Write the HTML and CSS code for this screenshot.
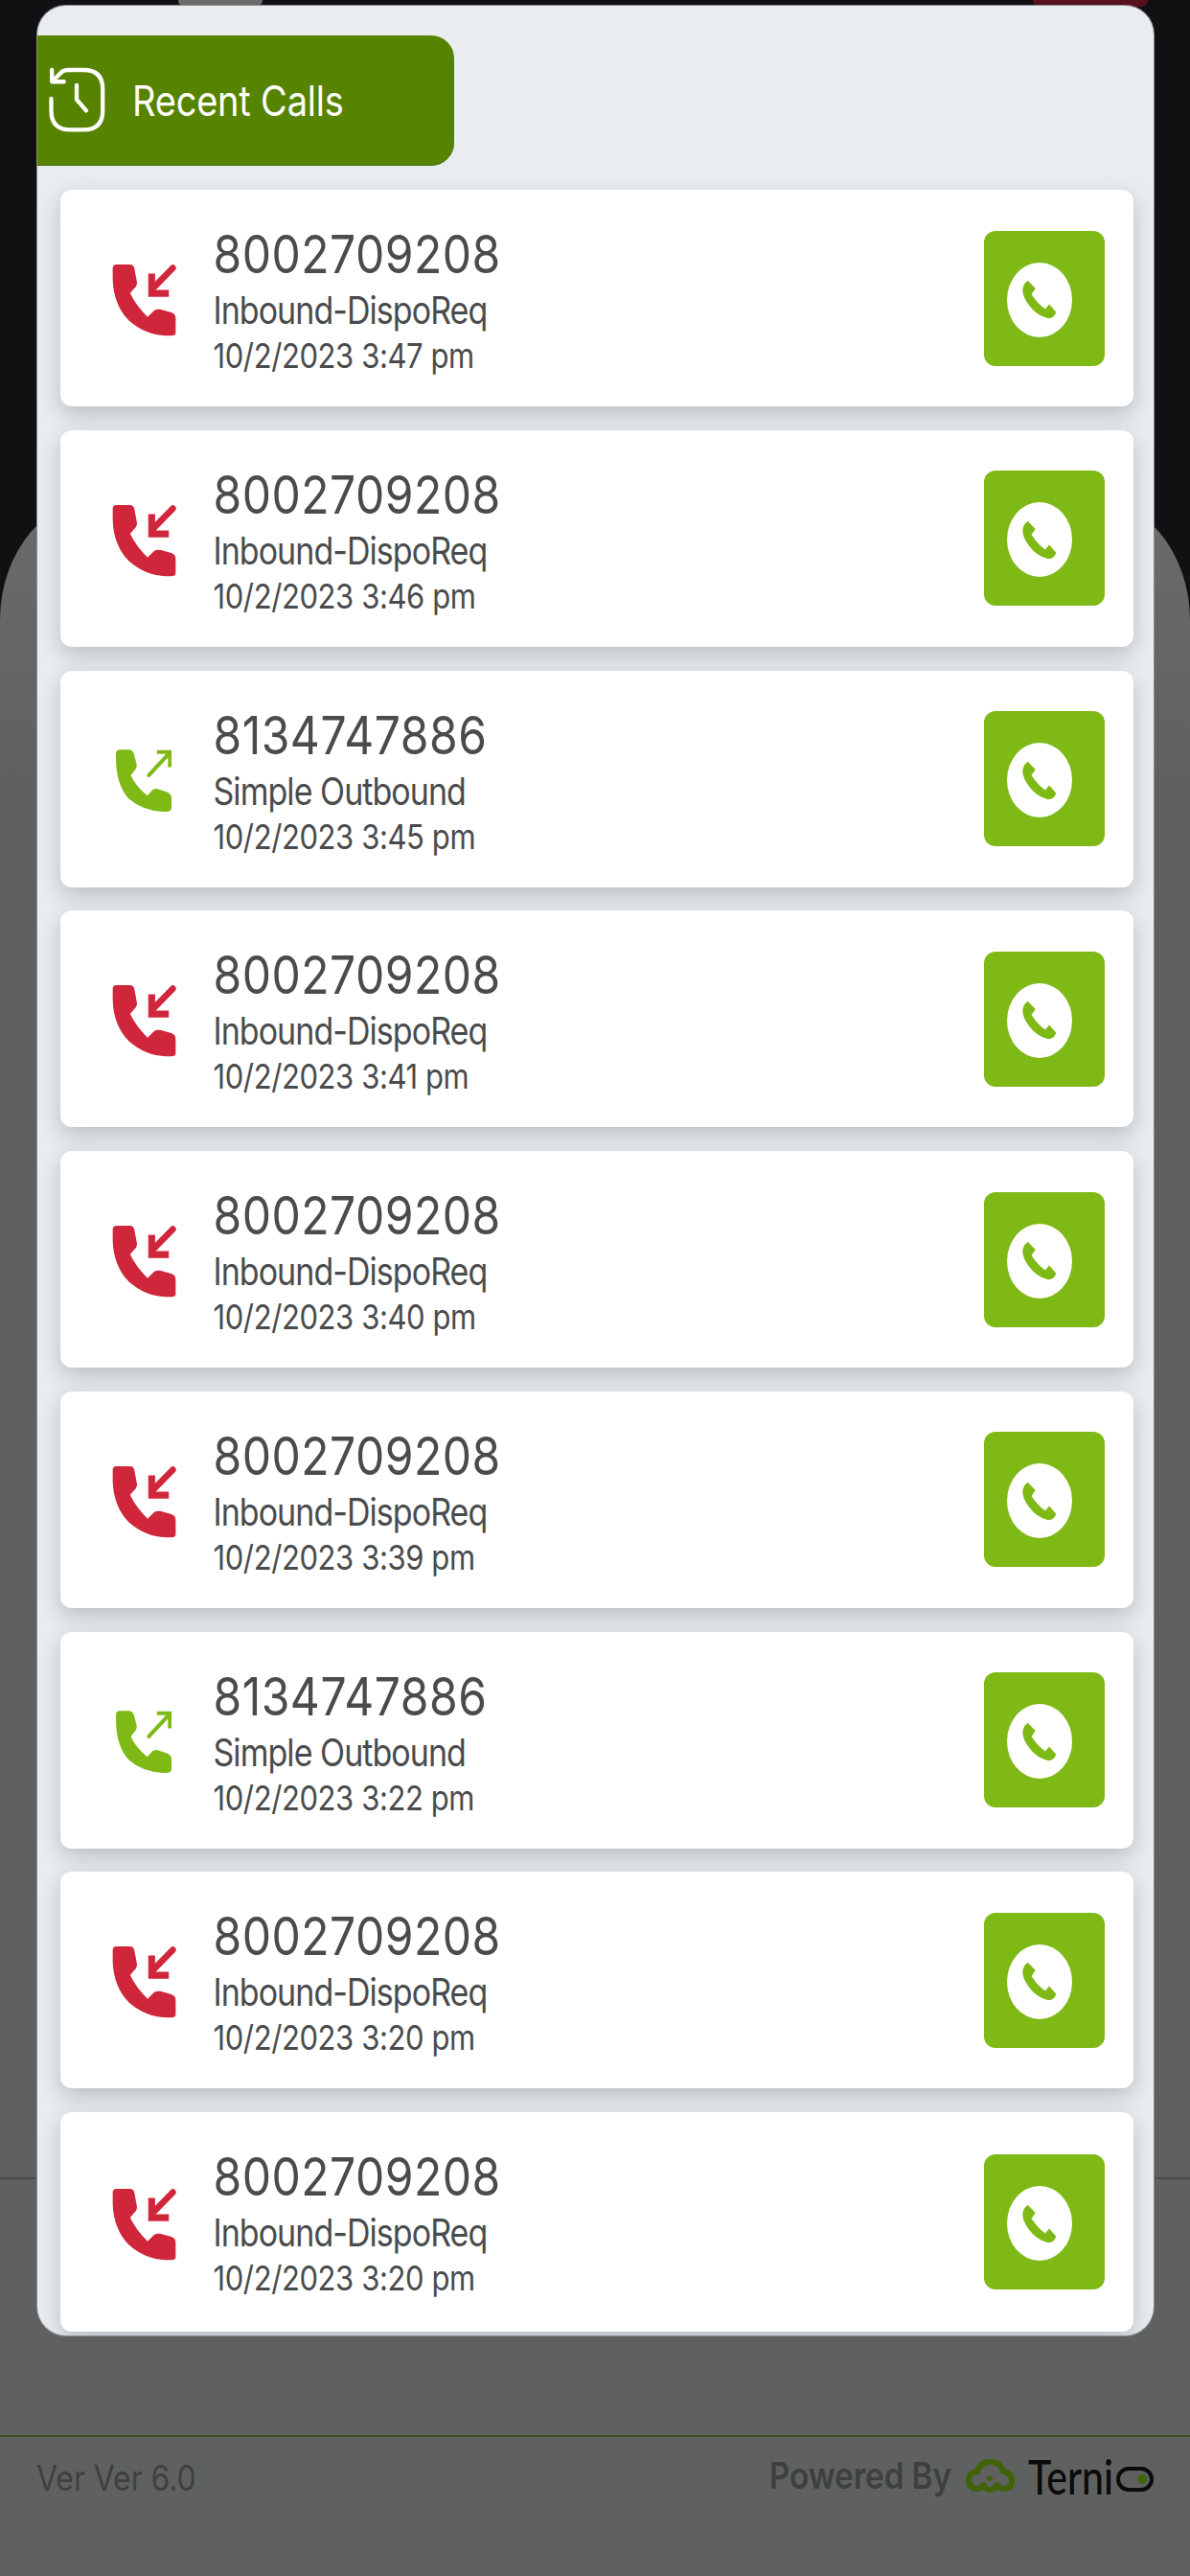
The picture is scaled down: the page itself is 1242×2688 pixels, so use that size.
FILE: index.html
```html
<!DOCTYPE html>
<html lang="en">
<head>
    <meta charset="UTF-8">
    <meta name="viewport" content="width=device-width, initial-scale=1.0">
    <title>Recent Calls</title>
    <link rel="stylesheet" href="styles.css">
</head>
<body>
    <svg class="icon-defs" aria-hidden="true">
        <symbol id="phone-in" viewBox="78 70 206 232" preserveAspectRatio="none">
            <path fill="currentColor" d="M92 73H135Q148 73 150 88L158 130Q158 142 148 150L136 165Q155 205 192 240L212 220Q220 214 232 216L268 226Q282 230 282 245V290Q282 300 268 300H250Q185 298 132 252Q82 200 80 120V85Q80 73 92 73Z"/>
            <path fill="none" stroke="currentColor" stroke-width="20" stroke-linecap="round" d="M273 84L212 146"/>
            <path fill="none" stroke="currentColor" stroke-width="22" d="M205 102V165H260"/>
        </symbol>
        <symbol id="phone-out" viewBox="68 65 172 193" preserveAspectRatio="none">
            <path fill="currentColor" d="M80 66H108Q120 66 124 80L132 110Q134 122 126 130L114 145Q130 180 165 208L182 190Q190 184 200 188L228 198Q240 204 240 216V245Q240 258 226 258H215Q150 255 108 218Q68 175 68 90V80Q68 66 80 66Z"/>
            <path fill="none" stroke="currentColor" stroke-width="12" stroke-linecap="round" d="M170 145L230 80"/>
            <path fill="none" stroke="currentColor" stroke-width="12" d="M195 73H235V120"/>
        </symbol>
        <symbol id="phone-dial" viewBox="165 186 113 126" preserveAspectRatio="none">
            <path fill="currentColor" d="M183 188L208 214L195 232Q215 262 240 280L253 264L276 290Q268 310 250 310Q210 300 185 265Q160 230 168 208Q172 195 183 188Z"/>
        </symbol>
    </svg>

    <div class="peek peek-grey"></div>
    <div class="peek peek-red"></div>

    <div class="sheet">
        <div class="sheet-top"></div>
        <div class="sheet-mid"></div>
        <div class="sheet-footer">
            <span class="version">Ver Ver 6.0</span>
            <div class="powered">
                <span class="powered-label">Powered By</span>
                <svg class="cloud" viewBox="0 0 51 35">
                    <path fill="none" stroke="currentColor" stroke-width="6" stroke-linejoin="round" d="M13 31Q3 31 3 22Q3 14 12 13Q15 3 26 3Q36 3 39 13Q48 14 48 23Q48 31 39 31Q35 31 33 27Q30 32 25 32Q20 32 18 27Q16 31 13 31Z"/>
                    <circle cx="25" cy="20" r="3" fill="currentColor"/>
                </svg>
                <span class="brand">Terni</span>
                <svg class="brand-pill" viewBox="0 0 39 26">
                    <rect x="2" y="2" width="35" height="22" rx="11" fill="none" stroke="currentColor" stroke-width="4"/>
                    <circle cx="27" cy="13" r="5" fill="#3f6306"/>
                </svg>
            </div>
        </div>
    </div>

    <div class="modal">
        <div class="modal-tab">
            <svg class="history-icon" viewBox="60 88 186 208">
                <path fill="none" stroke="#fff" stroke-width="13" stroke-linecap="round" stroke-linejoin="round" d="M72 97V134H110M76 130L100 106Q108 97 125 97H172Q232 97 232 157V225Q232 285 172 285H130Q70 285 70 225V187M150 145V190L180 225"/>
            </svg>
            <span class="tab-title">Recent Calls</span>
        </div>
        <div class="call-list">
            <div class="call-card">
                <div class="call-type"><svg class="icon-in"><use href="#phone-in"/></svg></div>
                <div class="call-info">
                    <div class="call-number">8002709208</div>
                    <div class="call-campaign">Inbound-DispoReq</div>
                    <div class="call-time">10/2/2023 3:47 pm</div>
                </div>
                <div class="call-btn"><div class="call-btn-circle"><svg class="icon-dial"><use href="#phone-dial"/></svg></div></div>
            </div>
            <div class="call-card">
                <div class="call-type"><svg class="icon-in"><use href="#phone-in"/></svg></div>
                <div class="call-info">
                    <div class="call-number">8002709208</div>
                    <div class="call-campaign">Inbound-DispoReq</div>
                    <div class="call-time">10/2/2023 3:46 pm</div>
                </div>
                <div class="call-btn"><div class="call-btn-circle"><svg class="icon-dial"><use href="#phone-dial"/></svg></div></div>
            </div>
            <div class="call-card">
                <div class="call-type"><svg class="icon-out"><use href="#phone-out"/></svg></div>
                <div class="call-info">
                    <div class="call-number">8134747886</div>
                    <div class="call-campaign">Simple Outbound</div>
                    <div class="call-time">10/2/2023 3:45 pm</div>
                </div>
                <div class="call-btn"><div class="call-btn-circle"><svg class="icon-dial"><use href="#phone-dial"/></svg></div></div>
            </div>
            <div class="call-card">
                <div class="call-type"><svg class="icon-in"><use href="#phone-in"/></svg></div>
                <div class="call-info">
                    <div class="call-number">8002709208</div>
                    <div class="call-campaign">Inbound-DispoReq</div>
                    <div class="call-time">10/2/2023 3:41 pm</div>
                </div>
                <div class="call-btn"><div class="call-btn-circle"><svg class="icon-dial"><use href="#phone-dial"/></svg></div></div>
            </div>
            <div class="call-card">
                <div class="call-type"><svg class="icon-in"><use href="#phone-in"/></svg></div>
                <div class="call-info">
                    <div class="call-number">8002709208</div>
                    <div class="call-campaign">Inbound-DispoReq</div>
                    <div class="call-time">10/2/2023 3:40 pm</div>
                </div>
                <div class="call-btn"><div class="call-btn-circle"><svg class="icon-dial"><use href="#phone-dial"/></svg></div></div>
            </div>
            <div class="call-card">
                <div class="call-type"><svg class="icon-in"><use href="#phone-in"/></svg></div>
                <div class="call-info">
                    <div class="call-number">8002709208</div>
                    <div class="call-campaign">Inbound-DispoReq</div>
                    <div class="call-time">10/2/2023 3:39 pm</div>
                </div>
                <div class="call-btn"><div class="call-btn-circle"><svg class="icon-dial"><use href="#phone-dial"/></svg></div></div>
            </div>
            <div class="call-card">
                <div class="call-type"><svg class="icon-out"><use href="#phone-out"/></svg></div>
                <div class="call-info">
                    <div class="call-number">8134747886</div>
                    <div class="call-campaign">Simple Outbound</div>
                    <div class="call-time">10/2/2023 3:22 pm</div>
                </div>
                <div class="call-btn"><div class="call-btn-circle"><svg class="icon-dial"><use href="#phone-dial"/></svg></div></div>
            </div>
            <div class="call-card">
                <div class="call-type"><svg class="icon-in"><use href="#phone-in"/></svg></div>
                <div class="call-info">
                    <div class="call-number">8002709208</div>
                    <div class="call-campaign">Inbound-DispoReq</div>
                    <div class="call-time">10/2/2023 3:20 pm</div>
                </div>
                <div class="call-btn"><div class="call-btn-circle"><svg class="icon-dial"><use href="#phone-dial"/></svg></div></div>
            </div>
            <div class="call-card">
                <div class="call-type"><svg class="icon-in"><use href="#phone-in"/></svg></div>
                <div class="call-info">
                    <div class="call-number">8002709208</div>
                    <div class="call-campaign">Inbound-DispoReq</div>
                    <div class="call-time">10/2/2023 3:20 pm</div>
                </div>
                <div class="call-btn"><div class="call-btn-circle"><svg class="icon-dial"><use href="#phone-dial"/></svg></div></div>
            </div>
        </div>
    </div>
</body>
</html>
```
FILE: styles.css
```css
html, body {
    margin: 0;
    padding: 0;
}
body {
    position: relative;
    width: 1242px;
    height: 2688px;
    overflow: hidden;
    background: #111113;
    font-family: Inter, "Liberation Sans", sans-serif;
    color: #4a4b4c;
}
.icon-defs {
    display: none;
}
.peek {
    position: absolute;
    top: 0;
    height: 7px;
}
.peek-grey {
    left: 186px;
    width: 88px;
    background: #6a6c6c;
    border-radius: 0 0 40px 40px;
}
.peek-red {
    left: 1078px;
    width: 120px;
    background: #5a0f1c;
    border-radius: 0 0 30px 30px;
}

/* dimmed page behind the popup */
.sheet {
    margin-top: 517px;
    height: 2171px;
    background: linear-gradient(#6a6c6b, #5f6161 300px);
    border-radius: 110px 110px 0 0 / 130px 130px 0 0;
}
.sheet-top {
    height: 1755px;
    border-bottom: 2px solid #4a4c4c;
}
.sheet-mid {
    height: 267px;
    border-bottom: 2px solid #3f4d1a;
}
.sheet-footer {
    display: flex;
    justify-content: space-between;
    padding: 20px 38px 0;
}
.version {
    font-size: 32px;
    line-height: 40px;
    letter-spacing: -0.1px;
    color: #3e4040;
    transform: scaleY(1.147);
    transform-origin: left top;
}
.powered {
    display: flex;
    align-items: center;
    height: 40px;
}
.powered-label {
    font-size: 33.5px;
    font-weight: 600;
    letter-spacing: -0.2px;
    color: #3e4040;
    transform: scaleY(1.147);
    margin-right: 15px;
}
.cloud {
    width: 51px;
    height: 35px;
    color: #3f6306;
    margin-right: 14px;
}
.brand {
    font-family: Lato, sans-serif;
    font-size: 41px;
    font-weight: 500;
    color: #0b0b0b;
    transform: scaleY(1.23);
}
.brand-pill {
    width: 39px;
    height: 26px;
    color: #0b0b0b;
    margin: 8px 0 0 3px;
}

/* popup */
.modal {
    position: absolute;
    left: 39px;
    top: 6px;
    width: 1165px;
    height: 2431px;
    overflow: hidden;
    background: #e9edf0;
    border-radius: 30px;
    box-shadow: 0 0 0 1px #8a8c8c;
}
.modal-tab {
    display: flex;
    align-items: center;
    width: 435px;
    height: 136px;
    margin-top: 31px;
    box-sizing: border-box;
    padding-left: 11px;
    background: #568300;
    border-bottom: 1px solid #44690a;
    border-radius: 0 24px 24px 0;
}
.history-icon {
    width: 62px;
    height: 69px;
    margin-right: 26px;
}
.tab-title {
    font-size: 38px;
    letter-spacing: -0.2px;
    color: #fff;
    transform: scaleY(1.147);
}
.call-list {
    display: flex;
    flex-direction: column;
    gap: 24.75px;
    padding: 25px 21.5px 0 23.5px;
}
.call-card {
    display: flex;
    align-items: center;
    flex-shrink: 0;
    height: 226px;
    background: #fff;
    border-radius: 12px;
    box-shadow: 0 8px 22px rgba(60, 70, 80, 0.28);
}
.call-card:last-child {
    height: 229px;
}
.call-type {
    display: flex;
    justify-content: center;
    width: 67px;
    margin: 4px 39px 0 54px;
}
.icon-in {
    flex-shrink: 0;
    width: 67px;
    height: 76px;
    color: #d0263c;
}
.icon-out {
    flex-shrink: 0;
    width: 58px;
    height: 65px;
    color: #7fb916;
}
.call-info {
    flex: 1;
    align-self: flex-start;
    padding-top: 30.6px;
    transform: scaleY(1.147);
    transform-origin: left top;
}
.call-number {
    font-size: 48px;
    line-height: 55px;
    letter-spacing: 0.5px;
}
.call-campaign {
    font-size: 34px;
    line-height: 47.5px;
    letter-spacing: -0.95px;
}
.call-time {
    font-size: 31px;
    line-height: 36px;
    letter-spacing: -0.4px;
}
.call-btn {
    display: flex;
    align-items: center;
    justify-content: center;
    flex-shrink: 0;
    width: 126px;
    height: 141px;
    box-sizing: border-box;
    padding: 3px 10px 0 0;
    margin-right: 30px;
    background: #7fb916;
    border-radius: 12px;
}
.call-btn-circle {
    display: flex;
    align-items: center;
    justify-content: center;
    width: 68px;
    height: 78px;
    background: #fff;
    border-radius: 50%;
}
.icon-dial {
    width: 36px;
    height: 41px;
    color: #7fb916;
}
```
